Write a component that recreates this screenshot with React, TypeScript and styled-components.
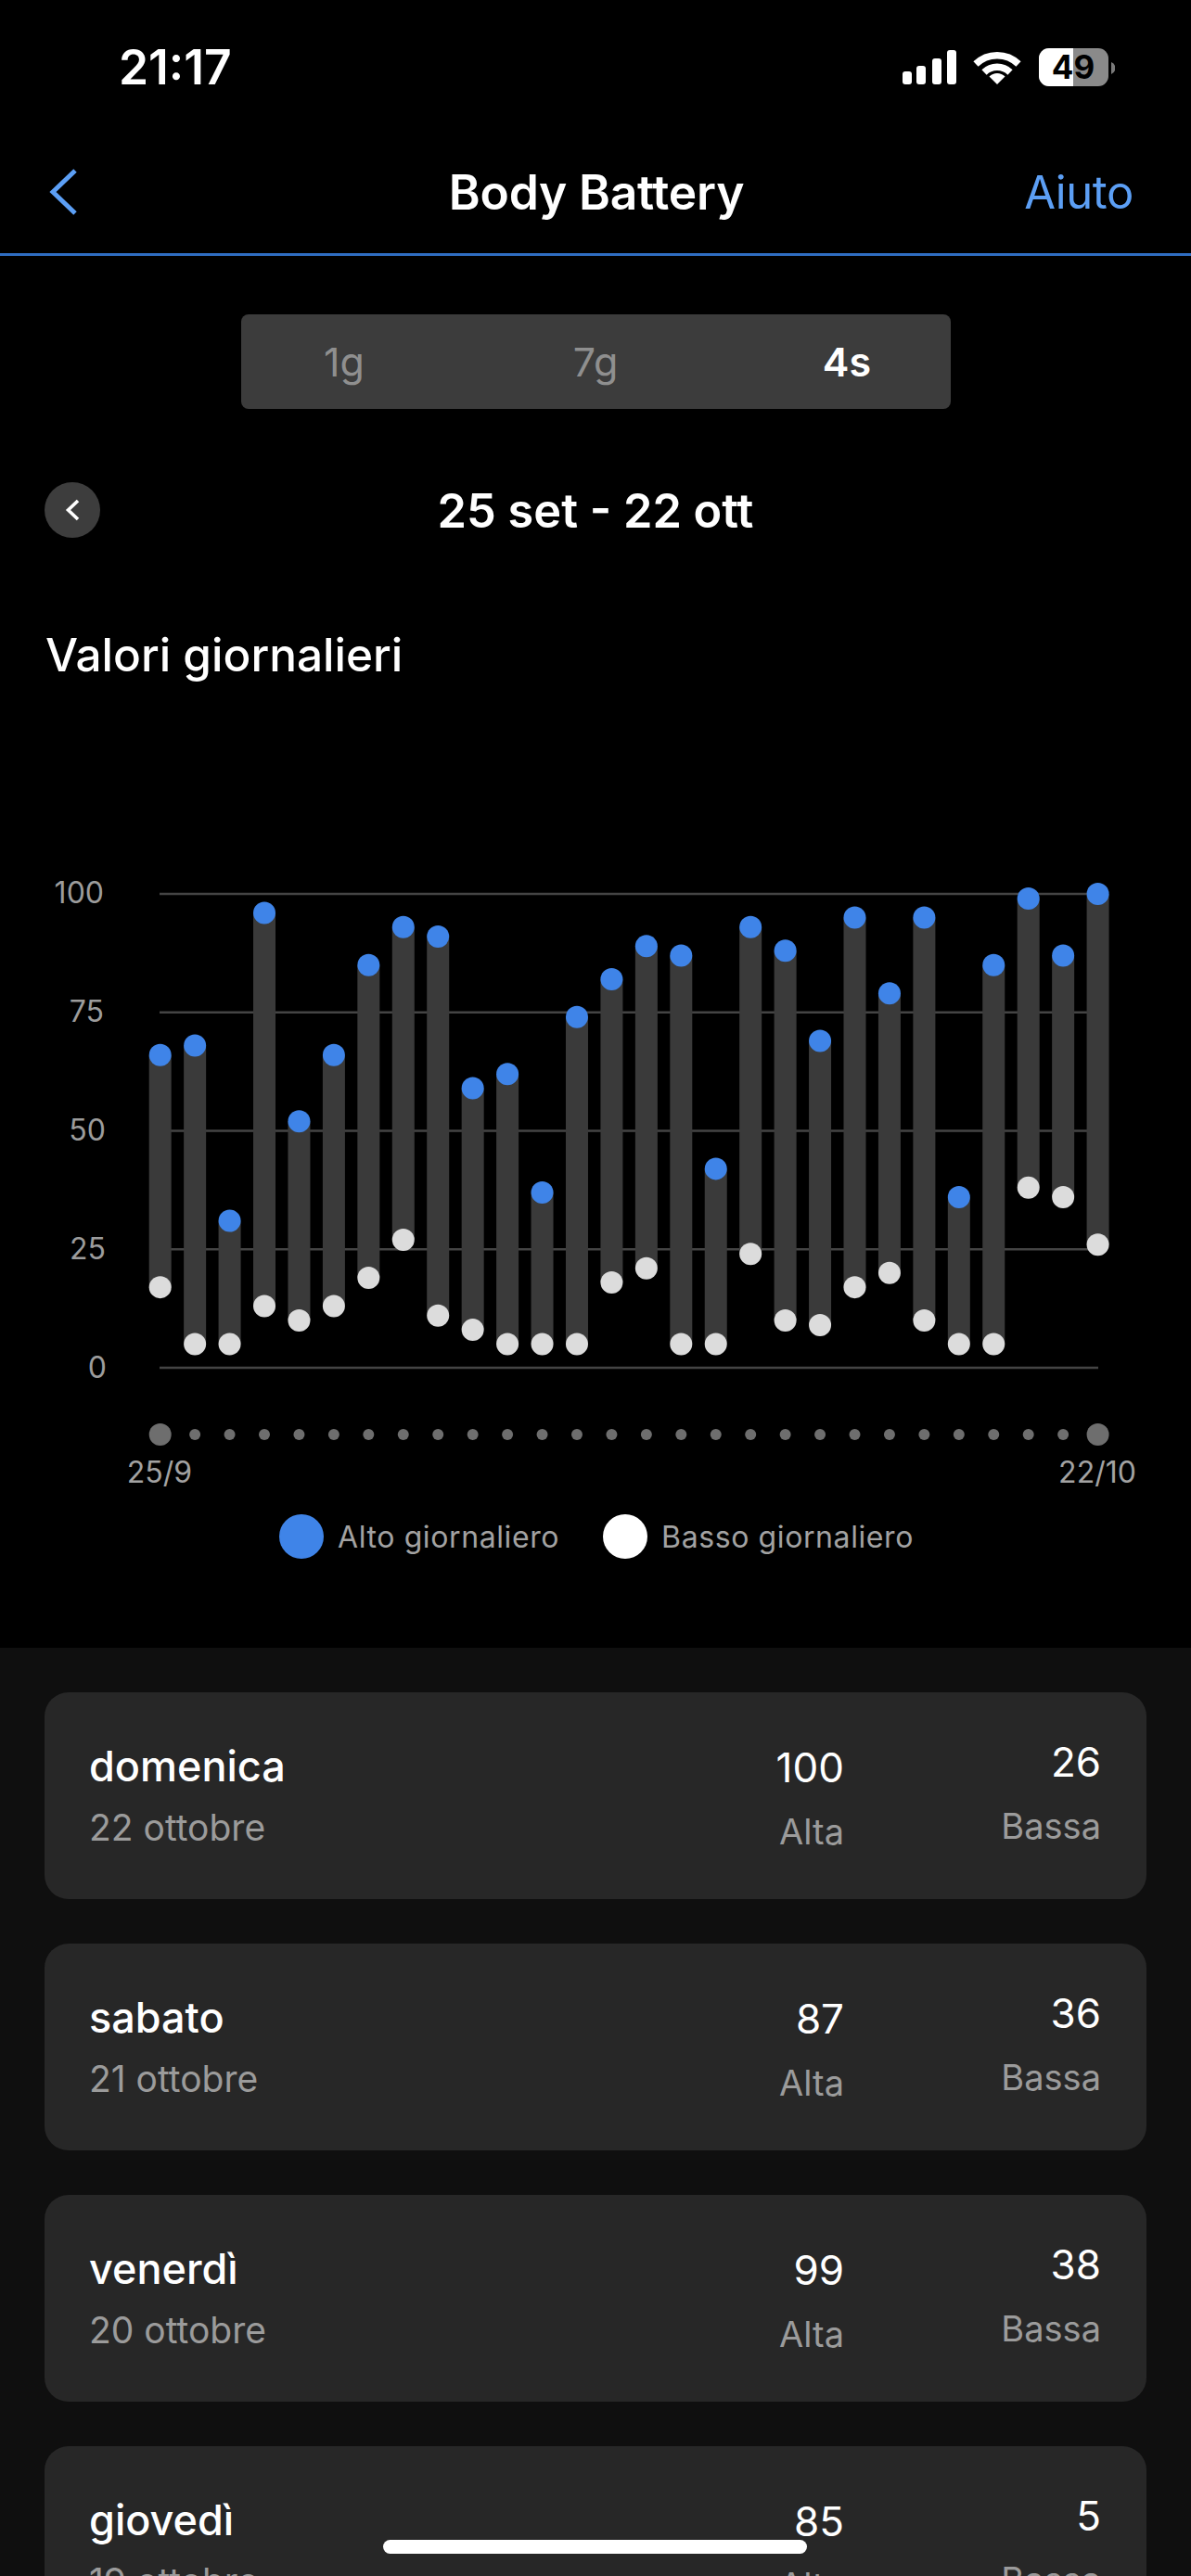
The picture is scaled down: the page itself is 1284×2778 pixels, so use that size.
import React from "react"
import styled, { createGlobalStyle } from "styled-components"

const GlobalStyle = createGlobalStyle`
  html, body {
    margin: 0;
    padding: 0;
    background: #000;
  }
  * {
    box-sizing: border-box;
  }
`

const FONT = `Inter, "Liberation Sans", sans-serif`
const BLUE = "#3f84e8"
const LINK = "#5c9ff5"

const Page = styled.div`
  position: relative;
  width: 1284px;
  height: 2778px;
  overflow: hidden;
  background: #000;
  font-family: ${FONT};
  color: #fff;
`
const StatusBar = styled.div`
  height: 145px;
  display: flex;
  justify-content: space-between;
  align-items: flex-start;
  padding: 42px 82px 0 128px;
`
const Clock = styled.span`
  font-size: 51.5px;
  line-height: 60px;
  font-weight: 600;
`
const StatusIcons = styled.svg`
  display: block;
  margin-top: 10px;
`
const NavBar = styled.div`
  height: 131px;
  display: grid;
  grid-template-columns: 1fr auto 1fr;
  align-items: center;
  padding: 0 62px 4px 52px;
  border-bottom: 3px solid #2f6dc2;
`
const NavTitle = styled.h1`
  margin: 0 0 0 12px;
  font-size: 51.5px;
  font-weight: 600;
  letter-spacing: -0.2px;
`
const NavLink = styled.a`
  justify-self: end;
  font-size: 49px;
  font-weight: 400;
  letter-spacing: -0.4px;
  color: ${LINK};
`
const TabsWrap = styled.div`
  display: flex;
  justify-content: center;
  padding-top: 63px;
`
const Tabs = styled.div`
  width: 765px;
  height: 102px;
  display: grid;
  grid-template-columns: repeat(3, 271px);
  justify-content: center;
  align-items: center;
  border-radius: 8px;
  background: #3c3c3c;
`
const Tab = styled.span<{ $active?: boolean }>`
  text-align: center;
  font-size: 43px;
  font-weight: ${props => (props.$active ? 600 : 400)};
  color: ${props => (props.$active ? "#fff" : "#8f8f8f")};
`
const DateRow = styled.div`
  position: relative;
  display: flex;
  justify-content: center;
  align-items: center;
  height: 60px;
  margin-top: 79px;
`
const RoundButton = styled.div`
  position: absolute;
  left: 48px;
  top: 0;
  width: 60px;
  height: 60px;
  display: flex;
  align-items: center;
  justify-content: center;
  border-radius: 50%;
  background: #3d3d3d;
`
const DateLabel = styled.h2`
  margin: 0;
  font-size: 50.5px;
  font-weight: 600;
`
const SectionTitle = styled.h3`
  margin: 0;
  padding: 96px 0 0 49px;
  font-size: 49.5px;
  line-height: 60px;
  font-weight: 500;
`
const Chart = styled.svg`
  display: block;
  margin-top: 204px;
`
const Legend = styled.div`
  display: flex;
  align-items: center;
  height: 48px;
  margin-top: 23px;
  padding-left: 301px;
`
const LegendDot = styled.span<{ $color: string }>`
  width: 48px;
  height: 48px;
  border-radius: 50%;
  background: ${props => props.$color};
`
const LegendText = styled.span`
  margin-left: 15px;
  margin-right: 47px;
  font-size: 32px;
  letter-spacing: 0.6px;
  color: #a2a2a2;
`
const ListSection = styled.div`
  margin-top: 96px;
  padding: 48px;
  display: flex;
  flex-direction: column;
  gap: 48px;
  background: #0f0f0f;
  min-height: 1200px;
`
const Card = styled.div`
  height: 223px;
  flex-shrink: 0;
  display: flex;
  align-items: flex-start;
  padding: 50px 49px 0 48px;
  border-radius: 26px;
  background: #272727;
`
const DayColumn = styled.div`
  flex: 1;
  display: flex;
  flex-direction: column;
  gap: 8px;
`
const DayName = styled.span`
  font-size: 45px;
  line-height: 60px;
  font-weight: 500;
`
const DayDate = styled.span`
  font-size: 39px;
  line-height: 56px;
  color: #9b9b9b;
`
const Stat = styled.div<{ $width: number; $drop: number }>`
  width: ${props => props.$width}px;
  margin-top: ${props => props.$drop}px;
  display: flex;
  flex-direction: column;
  gap: 13px;
  text-align: right;
`
const StatValue = styled.span`
  font-size: 44px;
  line-height: 56px;
  font-weight: 400;
`
const StatLabel = styled.span`
  font-size: 38px;
  line-height: 56px;
  color: #9b9b9b;
`
const HomeIndicator = styled.div`
  position: absolute;
  left: 413px;
  top: 2739px;
  width: 457px;
  height: 15px;
  border-radius: 8px;
  background: #fff;
`

const series: [number, number][] = [
  [66, 17], [68, 5], [31, 5], [96, 13], [52, 10], [66, 13], [85, 19],
  [93, 27], [91, 11], [59, 8], [62, 5], [37, 5], [74, 5], [82, 18],
  [89, 21], [87, 5], [42, 5], [93, 24], [88, 10], [69, 9], [95, 17],
  [79, 20], [95, 10], [36, 5], [85, 5], [99, 38], [87, 36], [100, 26],
]

const days = [
  { name: "domenica", date: "22 ottobre", high: 100, low: 26 },
  { name: "sabato", date: "21 ottobre", high: 87, low: 36 },
  { name: "venerdì", date: "20 ottobre", high: 99, low: 38 },
  { name: "giovedì", date: "19 ottobre", high: 85, low: 5 },
]

// chart coordinates, the svg starts at y=940 on the page
const ZERO_Y = 535
const UNIT = 5.11
const START_X = 172.7
const STEP = 37.44
const toY = (value: number) => ZERO_Y - value * UNIT
const toX = (index: number) => START_X + index * STEP

const yLabels = [
  { text: "100", x: 112, y: 34 },
  { text: "75", x: 112, y: 162 },
  { text: "50", x: 114, y: 290 },
  { text: "25", x: 114, y: 418 },
  { text: "0", x: 115, y: 546 },
]

const BodyBatteryChart = () => (
  <Chart width={1284} height={670} viewBox="0 0 1284 670" fontFamily={FONT}>
    {[100, 75, 50, 25, 0].map(value => (
      <line key={value} x1={172} x2={1184} y1={toY(value)} y2={toY(value)} stroke="#444" strokeWidth={2.5} />
    ))}
    {yLabels.map(label => (
      <text key={label.text} x={label.x} y={label.y} textAnchor="end" fontSize={32} fill="#9c9c9c">
        {label.text}
      </text>
    ))}
    {series.map(([high, low], i) => (
      <g key={i}>
        <rect x={toX(i) - 12} y={toY(high)} width={24} height={toY(low) - toY(high)} fill="#3a3a3a" />
        <circle cx={toX(i)} cy={toY(high)} r={12} fill={BLUE} />
        <circle cx={toX(i)} cy={toY(low)} r={12} fill="#dcdcdc" />
      </g>
    ))}
    {series.map((_, i) => {
      const isEnd = i === 0 || i === series.length - 1
      return <circle key={i} cx={toX(i)} cy={607} r={isEnd ? 12 : 6} fill="#6e6e6e" />
    })}
    <text x={172} y={659} textAnchor="middle" fontSize={32} fill="#a2a2a2">25/9</text>
    <text x={1183} y={659} textAnchor="middle" fontSize={32} fill="#a2a2a2">22/10</text>
  </Chart>
)

const StatusGlyphs = () => (
  <StatusIcons width={232} height={42} viewBox="0 0 232 42" fontFamily={FONT}>
    <rect x={3} y={25} width={10} height={14} rx={3} fill="#fff" />
    <rect x={18} y={19} width={10} height={20} rx={3} fill="#fff" />
    <rect x={35} y={11} width={10} height={28} rx={3} fill="#fff" />
    <rect x={51} y={2} width={10} height={37} rx={3} fill="#fff" />
    <g transform="translate(80 3)" fill="none" stroke="#fff" strokeWidth={7.5}>
      <path d="M2 14 A33 33 0 0 1 48 14" />
      <path d="M11 23 A20 20 0 0 1 39 23" />
      <path d="M16.5 27.5 A12 12 0 0 1 33.5 27.5 L25 36 Z" fill="#fff" stroke="none" />
    </g>
    <rect x={150} y={0} width={75} height={41} rx={11} fill="#8a8a8a" />
    <path d="M161 0 H187 V41 H161 A11 11 0 0 1 150 30 V11 A11 11 0 0 1 161 0 Z" fill="#fff" />
    <path d="M228 15 A7 7 0 0 1 228 28 Z" fill="#7a7a7a" />
    <text x={187} y={33} textAnchor="middle" fontSize={35} fontWeight={700} fill="#000">49</text>
  </StatusIcons>
)

const App = () => {
  return (
    <Page>
      <GlobalStyle />
      <StatusBar>
        <Clock>21:17</Clock>
        <StatusGlyphs />
      </StatusBar>
      <NavBar>
        <svg width={32} height={50} viewBox="0 0 32 50" fill="none">
          <path d="M29 2 L5 25 L29 48" stroke={LINK} strokeWidth={5} />
        </svg>
        <NavTitle>Body Battery</NavTitle>
        <NavLink>Aiuto</NavLink>
      </NavBar>
      <TabsWrap>
        <Tabs>
          <Tab>1g</Tab>
          <Tab>7g</Tab>
          <Tab $active>4s</Tab>
        </Tabs>
      </TabsWrap>
      <DateRow>
        <RoundButton>
          <svg width={18} height={26} viewBox="0 0 18 26" fill="none">
            <path d="M15 3 L4.5 13 L15 23" stroke="#fff" strokeWidth={3.6} />
          </svg>
        </RoundButton>
        <DateLabel>25 set - 22 ott</DateLabel>
      </DateRow>
      <SectionTitle>Valori giornalieri</SectionTitle>
      <BodyBatteryChart />
      <Legend>
        <LegendDot $color={BLUE} />
        <LegendText>Alto giornaliero</LegendText>
        <LegendDot $color="#fff" />
        <LegendText>Basso giornaliero</LegendText>
      </Legend>
      <ListSection>
        {days.map(day => (
          <Card key={day.name}>
            <DayColumn>
              <DayName>{day.name}</DayName>
              <DayDate>{day.date}</DayDate>
            </DayColumn>
            <Stat $width={200} $drop={3}>
              <StatValue>{day.high}</StatValue>
              <StatLabel>Alta</StatLabel>
            </Stat>
            <Stat $width={277} $drop={-3}>
              <StatValue>{day.low}</StatValue>
              <StatLabel>Bassa</StatLabel>
            </Stat>
          </Card>
        ))}
      </ListSection>
      <HomeIndicator />
    </Page>
  )
}

export default App
